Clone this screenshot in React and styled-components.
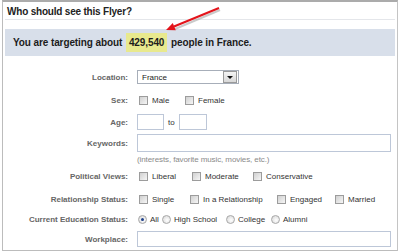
import React from "react";
import styled, { createGlobalStyle } from "styled-components";

const GlobalStyle = createGlobalStyle`
  html, body {
    margin: 0;
    padding: 0;
    background: #ffffff;
  }
  body {
    font-family: "Liberation Sans", Arial, sans-serif;
  }
`;

const Frame = styled.div`
  position: relative;
  margin-left: 2px;
  width: 394px;
  height: 248px;
  border-top: 2px solid #ababab;
  border-left: 1px solid #bcbcbc;
  border-right: 1px solid #c4c4c4;
  border-bottom: 1px solid #bcbcbc;
  overflow: hidden;
`;

const Header = styled.div`
  margin: 0 2px;
  height: 17px;
  padding-left: 2px;
  border-bottom: 1px solid #e4e6ea;
  font-size: 10px;
  font-weight: bold;
  color: #222;
  line-height: 20px;
  letter-spacing: -0.2px;
`;

const Banner = styled.div`
  margin: 9px 2px 0;
  height: 27px;
  display: flex;
  align-items: center;
  padding-left: 8px;
  background: #d8dfea;
  font-size: 10px;
  font-weight: bold;
  color: #1c1c1c;
  letter-spacing: -0.1px;
`;

const Count = styled.span`
  background: #e8e98e;
  padding: 4px 3px;
  margin: 0 1px;
`;

const Form = styled.div`
  display: flex;
  flex-direction: column;
`;

const Row = styled.div`
  display: grid;
  grid-template-columns: 125px 1fr;
  column-gap: 9px;
  align-items: center;
  margin-top: ${(p) => p.$gap}px;
  height: ${(p) => p.$h}px;
`;

const Label = styled.div`
  text-align: right;
  font-size: 8px;
  font-weight: bold;
  color: #666;
  white-space: nowrap;
`;

const Field = styled.div`
  display: flex;
  align-items: center;
  height: 100%;
  font-size: 8px;
  color: #333;
  white-space: nowrap;
`;

const Hint = styled.div`
  font-size: 8px;
  color: #8a8a8a;
  letter-spacing: -0.1px;
`;

const Select = styled.div`
  width: 96px;
  height: 12px;
  border: 1px solid #a7aeb9;
  display: flex;
  align-items: center;
  justify-content: space-between;
  padding-left: 4px;
  box-sizing: content-box;
  font-size: 8px;
  color: #222;
`;

const SelectButton = styled.div`
  width: 12px;
  height: 10px;
  margin-right: 1px;
  border: 1px solid #9a9a9a;
  background: linear-gradient(#f4f4f4, #d8d8d8);
  display: flex;
  align-items: center;
  justify-content: center;
`;

const Caret = styled.div`
  width: 0;
  height: 0;
  border-left: 3px solid transparent;
  border-right: 3px solid transparent;
  border-top: 3px solid #111;
`;

const TextBox = styled.div`
  box-sizing: border-box;
  width: ${(p) => p.$w}px;
  height: ${(p) => p.$h}px;
  border: 1px solid #bdc7d8;
  background: #fff;
`;

const To = styled.span`
  margin: 0 4px;
  color: #333;
`;

const Option = styled.label`
  display: flex;
  align-items: center;
  flex: none;
  width: ${(p) => (p.$w ? `${p.$w}px` : "auto")};
`;

const Box = styled.span`
  box-sizing: border-box;
  width: 9px;
  height: 9px;
  margin: 0 4px 0 2px;
  border: 1px solid #9c9c9c;
  background: linear-gradient(135deg, #d0d0d0, #f6f6f6);
`;

const Radio = styled.span`
  position: relative;
  box-sizing: border-box;
  width: 9px;
  height: 9px;
  margin: 0 3px 0 1px;
  border-radius: 50%;
  border: 1px solid #a8a8a8;
  background: radial-gradient(circle at 60% 60%, #ffffff, #d4d4d4);

  &::after {
    content: "";
    display: ${(p) => (p.$on ? "block" : "none")};
    position: absolute;
    left: 2px;
    top: 2px;
    width: 3px;
    height: 3px;
    border-radius: 50%;
    background: #1d3f8a;
  }
`;

const Arrow = styled.svg`
  position: absolute;
  left: 150px;
  top: -2px;
`;

const App = () => {
  return (
    <>
      <GlobalStyle />
      <Frame>
        <Header>Who should see this Flyer?</Header>
        <Banner>
          You are targeting about&nbsp;<Count>429,540</Count>&nbsp;people in France.
        </Banner>
        <Form>
          <Row $gap={14} $h={14}>
            <Label>Location:</Label>
            <Field>
              <Select>
                France
                <SelectButton>
                  <Caret />
                </SelectButton>
              </Select>
            </Field>
          </Row>
          <Row $gap={10} $h={12}>
            <Label>Sex:</Label>
            <Field>
              <Option $w={46}><Box />Male</Option>
              <Option><Box />Female</Option>
            </Field>
          </Row>
          <Row $gap={8} $h={16}>
            <Label>Age:</Label>
            <Field>
              <TextBox $w={27} $h={16} />
              <To>to</To>
              <TextBox $w={28} $h={16} />
            </Field>
          </Row>
          <Row $gap={4} $h={18}>
            <Label>Keywords:</Label>
            <Field>
              <TextBox $w={254} $h={18} />
            </Field>
          </Row>
          <Row $gap={2} $h={10}>
            <div />
            <Hint>(interests, favorite music, movies, etc.)</Hint>
          </Row>
          <Row $gap={6} $h={12}>
            <Label>Political Views:</Label>
            <Field>
              <Option $w={53}><Box />Liberal</Option>
              <Option $w={61}><Box />Moderate</Option>
              <Option><Box />Conservative</Option>
            </Field>
          </Row>
          <Row $gap={11} $h={12}>
            <Label>Relationship Status:</Label>
            <Field>
              <Option $w={51}><Box />Single</Option>
              <Option $w={87}><Box />In a Relationship</Option>
              <Option $w={58}><Box />Engaged</Option>
              <Option><Box />Married</Option>
            </Field>
          </Row>
          <Row $gap={8} $h={12}>
            <Label>Current Education Status:</Label>
            <Field>
              <Option $w={24}><Radio $on />All</Option>
              <Option $w={64}><Radio />High School</Option>
              <Option $w={45}><Radio />College</Option>
              <Option><Radio />Alumni</Option>
            </Field>
          </Row>
          <Row $gap={6} $h={16}>
            <Label>Workplace:</Label>
            <Field>
              <TextBox $w={254} $h={16} />
            </Field>
          </Row>
        </Form>
        <Arrow width="80" height="40" viewBox="0 0 80 40">
          <line x1="67" y1="10" x2="22" y2="29" stroke="#a0a0a0" strokeWidth="2" opacity="0.55" />
          <line x1="66" y1="8" x2="21" y2="26.5" stroke="#e3141b" strokeWidth="2" />
          <polygon points="13,30 19.8,22.9 22.8,30.2" fill="#e3141b" />
        </Arrow>
      </Frame>
    </>
  );
};

export default App;
